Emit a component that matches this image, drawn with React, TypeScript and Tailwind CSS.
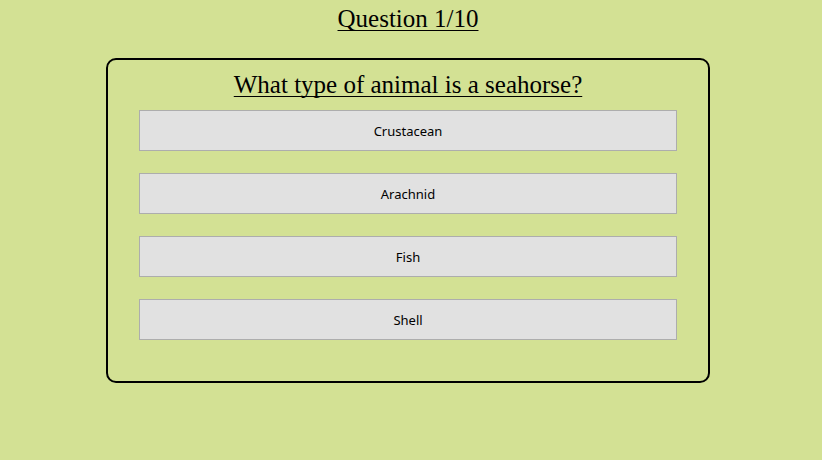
const answers = ["Crustacean", "Arachnid", "Fish", "Shell"];

export default function App() {
  return (
    <main className="min-h-screen bg-[#d3e194] pt-1 pr-28 pl-[106px] text-center text-black">
      <h1 className="font-['Liberation_Serif',serif] text-[25px] leading-[30px] underline decoration-1 underline-offset-3 [text-decoration-skip-ink:none]">
        Question 1/10
      </h1>
      <section className="mt-6 rounded-[10px] border-2 border-black px-[31px] pt-2.5 pb-[41px]">
        <h2 className="mb-2.5 font-['Liberation_Serif',serif] text-[25px] leading-[30px] underline decoration-1 underline-offset-3 [text-decoration-skip-ink:none]">
          What type of animal is a seahorse?
        </h2>
        <div className="flex flex-col gap-[22px]">
          {answers.map((answer) => (
            <button
              key={answer}
              type="button"
              className="h-[41px] w-full border border-[#adadad] bg-[#e1e1e1] pt-0.5 font-['Noto_Sans',sans-serif] text-[13px]"
            >
              {answer}
            </button>
          ))}
        </div>
      </section>
    </main>
  );
}
